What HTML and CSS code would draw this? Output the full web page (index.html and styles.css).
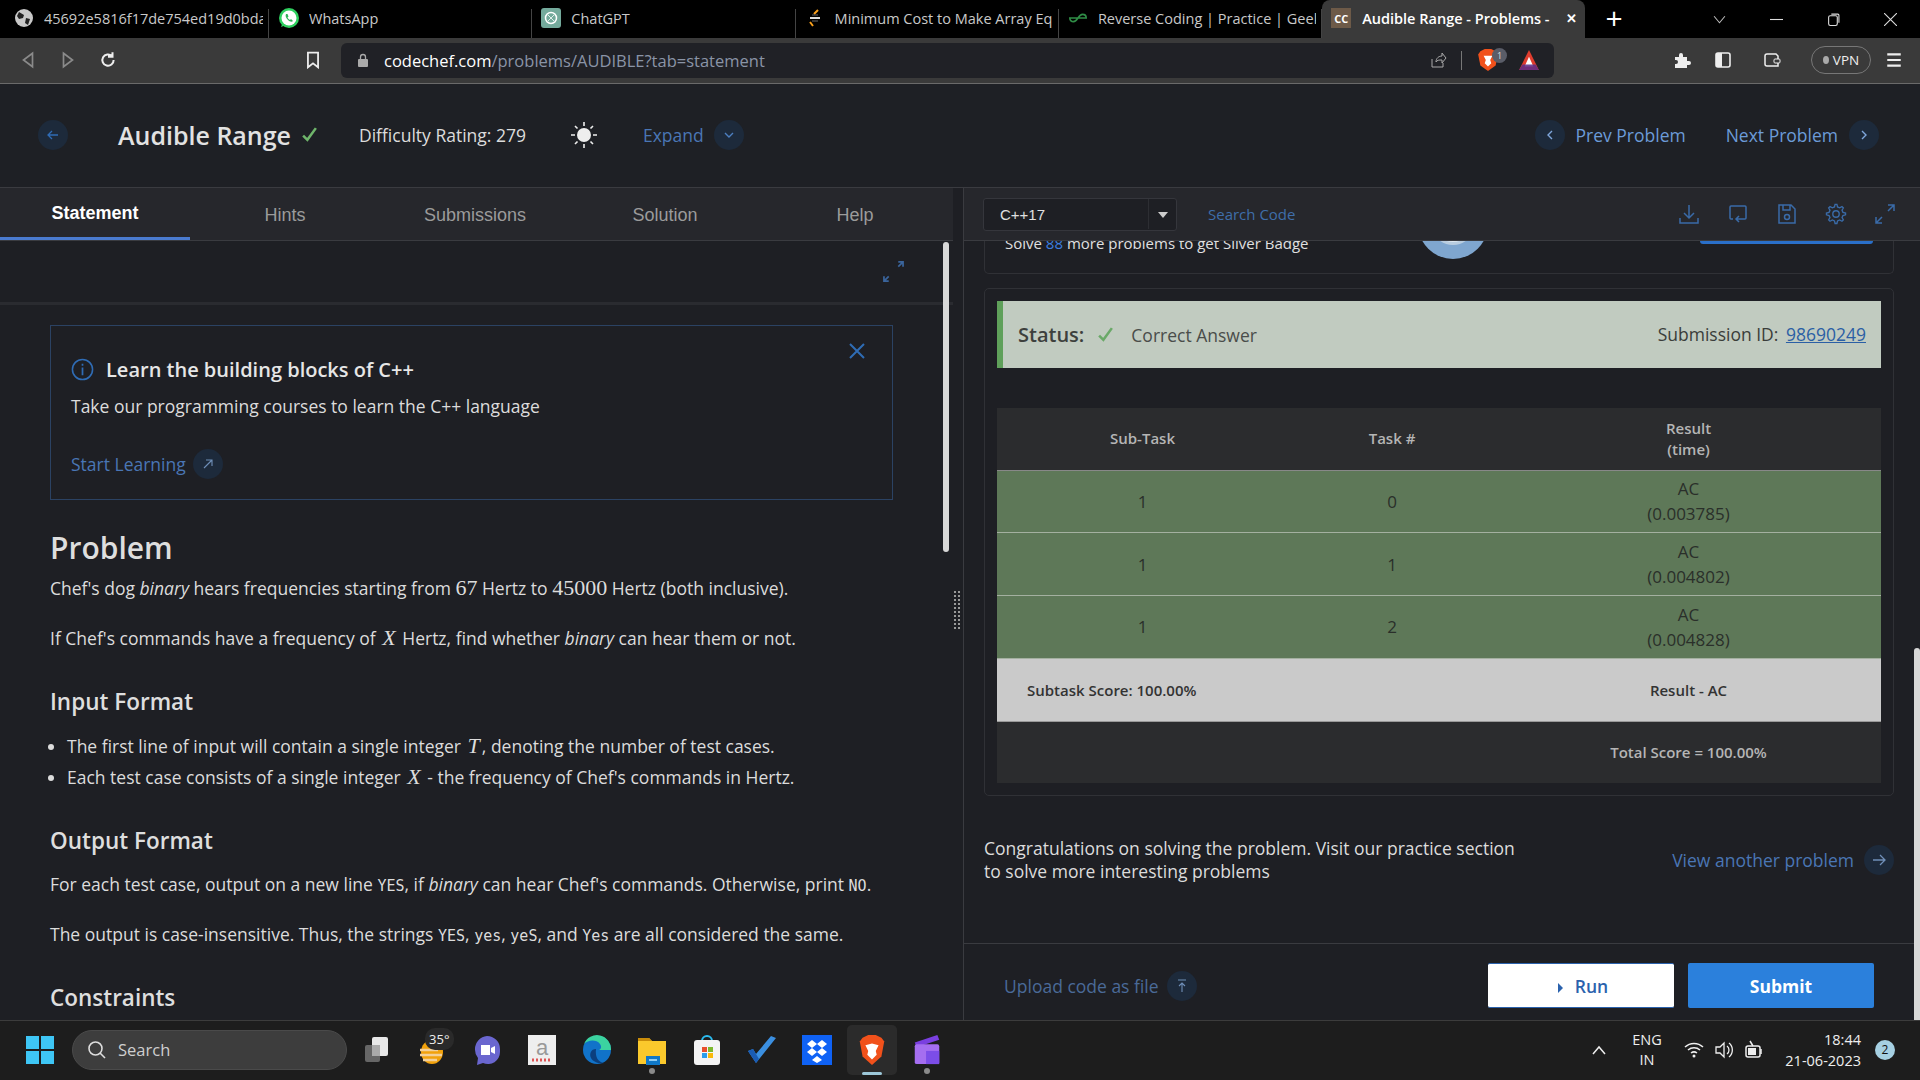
FILE: index.html
```html
<!DOCTYPE html>
<html lang="en">
<head>
<meta charset="UTF-8">
<title>Audible Range - Problems - CodeChef</title>
<link rel="stylesheet" href="styles.css">
</head>
<body>

<!-- Browser tabs -->
<div class="tabstrip">
    <div class="tab">
        <svg class="fav" viewBox="0 0 20 20"><circle cx="10" cy="10" r="9" fill="#c9c9c9"/><path d="M5 4l5 3-1 3-4 1-2-3zM12 10l4 1-2 6-3-2z" fill="#222"/></svg>
        <span class="tab-name">45692e5816f17de754ed19d0bda</span>
    </div>
    <div class="tab">
        <svg class="fav fav-big" viewBox="0 0 22 22"><circle cx="11" cy="11" r="10" fill="#2fd05f"/><path d="M3 20l2-5 3 3z" fill="#2fd05f"/><circle cx="11" cy="11" r="7.5" fill="#fff"/><path d="M8 7c-1 2 0 4 2 6s4 2 5 1l-2-2-1 1c-1-.5-2-1.500-2.500-2.500l1-1-1-2.500z" fill="#2fb257"/></svg>
        <span class="tab-name">WhatsApp</span>
    </div>
    <div class="tab">
        <svg class="fav" viewBox="0 0 20 20"><rect width="20" height="20" rx="3" fill="#74aa9c"/><circle cx="10" cy="10" r="5.500" fill="none" stroke="#fff" stroke-width="1.500"/><path d="M6 6l8 8M14 6l-8 8" stroke="#dfeeea"/></svg>
        <span class="tab-name">ChatGPT</span>
    </div>
    <div class="tab">
        <svg class="fav" viewBox="0 0 20 20"><path d="M13 2l-4 4M5 14l3 4" stroke="#f89f1b" stroke-width="2" fill="none"/><path d="M5 10h10" stroke="#ddd" stroke-width="2"/><path d="M7 7h6M7 13h6" stroke="#666"/></svg>
        <span class="tab-name">Minimum Cost to Make Array Eq</span>
    </div>
    <div class="tab">
        <svg class="fav" viewBox="0 0 22 20"><path d="M11 10H20c0-3-2-4-4-4s-3 1-5 4-3 4-5 4-4-1-4-4h9" fill="none" stroke="#2f8d46" stroke-width="1.800"/></svg>
        <span class="tab-name">Reverse Coding | Practice | Geeks</span>
    </div>
    <div class="tab tab-active">
        <span class="fav-cc">CC</span>
        <span class="tab-name">Audible Range - Problems -</span>
        <span class="tab-x">✕</span>
    </div>
    <span class="tab-plus">+</span>
    <div class="win-btns">
        <svg class="win-icon" viewBox="0 0 12 12"><path d="M1 3l5 6 5-6" fill="none" stroke="#bbb"/></svg>
        <svg class="win-icon" viewBox="0 0 12 12"><path d="M0 6h12" stroke="#ddd"/></svg>
        <svg class="win-icon" viewBox="0 0 12 12"><rect x="1.500" y="2.500" width="8" height="9" rx="1.500" fill="none" stroke="#ddd"/><path d="M4 1h6a1 1 0 0 1 1 1v7" fill="none" stroke="#ddd"/></svg>
        <svg class="win-icon" viewBox="0 0 12 12"><path d="M0 0l12 12M12 0L0 12" stroke="#ddd"/></svg>
    </div>
</div>

<!-- Browser toolbar -->
<div class="toolbar">
    <div class="nav-btns">
        <svg class="tool-icon" viewBox="0 0 16 16"><path d="M12 2L4 8l8 6z" fill="none" stroke="#8a8a8a" stroke-width="1.500"/></svg>
        <svg class="tool-icon" viewBox="0 0 16 16"><path d="M4 2l8 6-8 6z" fill="none" stroke="#8a8a8a" stroke-width="1.500"/></svg>
        <svg class="tool-icon" viewBox="0 0 16 16"><path d="M13 8a5 5 0 1 1-1.500-3.500M12 1v4H8" fill="none" stroke="#eee" stroke-width="1.800"/></svg>
    </div>
    <svg class="tool-icon bookmark" viewBox="0 0 16 16"><path d="M3.500 1.500h9v13L8 11l-4.500 3.500z" fill="none" stroke="#eee" stroke-width="1.600"/></svg>
    <div class="urlbar">
        <svg class="lock" viewBox="0 0 12 14"><rect x="1" y="6" width="10" height="8" rx="1" fill="#aaa"/><path d="M3.500 6V4a2.500 2.500 0 0 1 5 0v2" fill="none" stroke="#aaa" stroke-width="1.300"/></svg>
        <span class="url"><span class="url-host">codechef.com</span>/problems/AUDIBLE?tab=statement</span>
        <div class="url-right">
            <svg class="tool-icon" viewBox="0 0 18 18"><path d="M3 8v8h11v-4M7 11c0-4 3-6 6-6V2l4 5-4 5V9c-3 0-5 0-6 2z" fill="none" stroke="#aaa"/></svg>
            <span class="url-sep"></span>
            <div class="brave-wrap">
                <svg class="brave-small" viewBox="0 0 18 22"><path d="M2 3l4-2h6l4 2 2 3-2 10-7 5-7-5L0 6z" fill="#f1511b"/><path d="M5 7h8l-2 4 1 3-3 3-3-3 1-3z" fill="#fff"/></svg>
                <span class="brave-count">1</span>
            </div>
            <svg class="tool-icon tri" viewBox="0 0 20 20"><path d="M10 1l9 18H1z" fill="#e03d2e"/><path d="M10 7l4 9H6z" fill="#fff"/><path d="M1 19l3-5h12l3 5z" fill="#5b2c8a" opacity=".85"/></svg>
        </div>
    </div>
    <div class="toolbar-right">
        <svg class="tool-icon" viewBox="0 0 18 18"><path d="M2 6h4V4a2 2 0 0 1 4 0v2h4v4h2a2 2 0 0 1 0 4h-2v3H2v-4h1a2 2 0 0 0 0-4H2z" fill="#eee"/></svg>
        <svg class="tool-icon" viewBox="0 0 18 18"><rect x="2" y="2" width="14" height="14" rx="2" fill="none" stroke="#eee" stroke-width="1.600"/><rect x="2" y="2" width="6" height="14" fill="#eee"/></svg>
        <svg class="tool-icon wallet" viewBox="0 0 18 18"><path d="M2 5a2 2 0 0 1 2-2h9l2 2v10H4a2 2 0 0 1-2-2z" fill="none" stroke="#eee" stroke-width="1.500"/><rect x="11" y="8" width="6" height="4" rx="1" fill="#3a3a3a" stroke="#eee"/></svg>
        <span class="vpn"><i class="vpn-dot"></i>VPN</span>
        <svg class="tool-icon" viewBox="0 0 16 16"><path d="M2 3h12M2 8h12M2 13h12" stroke="#eee" stroke-width="1.800"/></svg>
    </div>
</div>

<!-- Problem header -->
<div class="head">
    <span class="round"><svg viewBox="0 0 14 14"><path d="M12 7H2M6 3L2 7l4 4" fill="none" stroke="#2f6cb5" stroke-width="1.300"/></svg></span>
    <h1 class="title">Audible Range</h1>
    <svg class="title-check" viewBox="0 0 16 14"><path d="M2 8l4 4 8-11" fill="none" stroke="#6fb56b" stroke-width="2.400"/></svg>
    <span class="rating">Difficulty Rating: 279</span>
    <svg class="sun" viewBox="0 0 28 28"><circle cx="14" cy="14" r="7" fill="#eee"/><path d="M14 1v4M14 23v4M1 14h4M23 14h4M5 5l2.500 2.500M20.500 20.500L23 23M23 5l-2.500 2.500M7.500 20.500L5 23" stroke="#eee" stroke-width="1.600"/></svg>
    <span class="link expand">Expand</span>
    <span class="round"><svg viewBox="0 0 14 14"><path d="M3 5l4 4 4-4" fill="none" stroke="#4d7fc0" stroke-width="1.400"/></svg></span>
    <div class="head-right">
        <span class="round"><svg viewBox="0 0 14 14"><path d="M9 3L5 7l4 4" fill="none" stroke="#7fa7dc" stroke-width="1.400"/></svg></span>
        <span class="link link-light">Prev Problem</span>
        <span class="link link-light next">Next Problem</span>
        <span class="round"><svg viewBox="0 0 14 14"><path d="M5 3l4 4-4 4" fill="none" stroke="#7fa7dc" stroke-width="1.400"/></svg></span>
    </div>
</div>

<div class="workspace">

    <!-- Left side: statement -->
    <div class="left">
        <div class="tabs">
            <span class="tabs-item tabs-on">Statement</span>
            <span class="tabs-item">Hints</span>
            <span class="tabs-item">Submissions</span>
            <span class="tabs-item">Solution</span>
            <span class="tabs-item">Help</span>
        </div>
        <div class="subbar">
            <svg class="mini-expand" viewBox="0 0 22 22"><path d="M16 1h5v5M21 1l-5 5M6 21H1v-5M1 21l5-5" fill="none" stroke="#3a649c" stroke-width="1.800"/></svg>
        </div>
        <div class="statement">
            <div class="alert">
                <svg class="alert-x" viewBox="0 0 18 18"><path d="M2 2l14 14M16 2L2 16" stroke="#2f6cb5" stroke-width="2"/></svg>
                <div class="alert-title">
                    <svg class="info" viewBox="0 0 24 24"><circle cx="12" cy="12" r="10.500" fill="none" stroke="#2f6cb5" stroke-width="1.600"/><path d="M12 10v8M12 6v2" stroke="#2f6cb5" stroke-width="1.800"/></svg>
                    Learn the building blocks of C++
                </div>
                <p class="alert-text">Take our programming courses to learn the C++ language</p>
                <div class="alert-link">
                    <span class="link">Start Learning</span>
                    <span class="round"><svg viewBox="0 0 14 14"><path d="M3 11l8-8M5 3h6v6" fill="none" stroke="#6f8fb8" stroke-width="1.100"/></svg></span>
                </div>
            </div>

            <h2 class="h-problem">Problem</h2>
            <p class="para">Chef's dog <i>binary</i> hears frequencies starting from <span class="math">67</span> Hertz to <span class="math">45000</span> Hertz (both inclusive).</p>
            <p class="para">If Chef's commands have a frequency of <i class="math math-var">X</i> Hertz, find whether <i>binary</i> can hear them or not.</p>

            <h3 class="h-sec">Input Format</h3>
            <ul class="list">
                <li>The first line of input will contain a single integer <i class="math math-var">T</i>, denoting the number of test cases.</li>
                <li>Each test case consists of a single integer <i class="math math-var">X</i> - the frequency of Chef's commands in Hertz.</li>
            </ul>

            <h3 class="h-sec">Output Format</h3>
            <p class="para">For each test case, output on a new line <span class="code">YES</span>, if <i>binary</i> can hear Chef's commands. Otherwise, print <span class="code">NO</span>.</p>
            <p class="para">The output is case-insensitive. Thus, the strings <span class="code">YES</span>, <span class="code">yes</span>, <span class="code">yeS</span>, and <span class="code">Yes</span> are all considered the same.</p>

            <h3 class="h-sec">Constraints</h3>
        </div>
        <div class="scroll-thumb"></div>
    </div>

    <div class="divider"><span class="grip"></span></div>

    <!-- Right side: editor and result -->
    <div class="right">
        <div class="editor-bar">
            <div class="lang">
                <span class="lang-name">C++17</span>
                <span class="lang-arrow"></span>
            </div>
            <span class="search-code">Search Code</span>
            <div class="editor-icons">
                <svg viewBox="0 0 22 22"><path d="M11 2v13M6 10l5 5 5-5M2 15v5h18v-5" fill="none" stroke="#3a6ba8" stroke-width="1.500"/></svg>
                <svg viewBox="0 0 22 22"><path d="M6 16H4a1 1 0 0 1-1-1V4a1 1 0 0 1 1-1h14a1 1 0 0 1 1 1v11a1 1 0 0 1-1 1H9M12 13l-3 3 3 3" fill="none" stroke="#3a6ba8" stroke-width="1.500"/></svg>
                <svg viewBox="0 0 22 22"><path d="M3 2h12l4 4v14H3zM7 2v5h7V2" fill="none" stroke="#3a6ba8" stroke-width="1.500"/><circle cx="11" cy="14" r="2.500" fill="none" stroke="#3a6ba8" stroke-width="1.500"/></svg>
                <svg viewBox="0 0 24 24"><circle cx="12" cy="12" r="3.500" fill="none" stroke="#3a6ba8" stroke-width="1.500"/><path d="M11 1.500h2l.7 2.800 2.300 1 2.500-1.400 1.500 1.500-1.400 2.500 1 2.300 2.800.7v2l-2.800.7-1 2.300 1.400 2.500-1.500 1.500-2.500-1.400-2.300 1-.7 2.800h-2l-.7-2.800-2.300-1-2.500 1.400-1.500-1.500 1.400-2.500-1-2.300-2.800-.7v-2l2.800-.7 1-2.300-1.400-2.500 1.500-1.500 2.500 1.400 2.300-1z" fill="none" stroke="#3a6ba8" stroke-width="1.500"/></svg>
                <svg viewBox="0 0 22 22"><path d="M14 2h6v6M20 2l-6 6M8 20H2v-6M2 20l6-6" fill="none" stroke="#3a6ba8" stroke-width="1.500"/></svg>
            </div>
        </div>
        <div class="result-scroll">
            <div class="badge-card">
                <span class="badge-text">Solve <span class="badge-num">88</span> more problems to get Silver Badge</span>
                <span class="badge-pic"><i></i></span>
                <span class="badge-btn"></span>
            </div>
            <div class="result-card">
                <div class="status">
                    <span class="status-label">Status:</span>
                    <svg class="status-check" viewBox="0 0 16 14"><path d="M2 8l4 4 8-11" fill="none" stroke="#6aa968" stroke-width="2.400"/></svg>
                    <span class="status-text">Correct Answer</span>
                    <span class="sub-id">Submission ID: <a class="sub-link">98690249</a></span>
                </div>
                <table class="result-table">
                    <thead>
                        <tr><th>Sub-Task</th><th>Task #</th><th>Result<br>(time)</th></tr>
                    </thead>
                    <tbody>
                        <tr class="ok"><td>1</td><td>0</td><td>AC<br>(0.003785)</td></tr>
                        <tr class="ok"><td>1</td><td>1</td><td>AC<br>(0.004802)</td></tr>
                        <tr class="ok"><td>1</td><td>2</td><td>AC<br>(0.004828)</td></tr>
                        <tr class="subtotal"><td colspan="2">Subtask Score: 100.00%</td><td>Result - AC</td></tr>
                        <tr class="total"><td colspan="2"></td><td>Total Score = 100.00%</td></tr>
                    </tbody>
                </table>
            </div>
            <div class="congrats">
                <p class="congrats-text">Congratulations on solving the problem. Visit our practice section to solve more interesting problems</p>
                <div class="view-next">
                    <span class="link">View another problem</span>
                    <span class="round"><svg viewBox="0 0 14 14"><path d="M1 7h12M8 2l5 5-5 5" fill="none" stroke="#6f8fb8" stroke-width="1.300"/></svg></span>
                </div>
            </div>
        </div>
        <div class="actions">
            <span class="link upload">Upload code as file</span>
            <span class="round"><svg viewBox="0 0 14 14"><path d="M3 1h8M7 13V4M4 7l3-3 3 3" fill="none" stroke="#6f8fb8" stroke-width="1.100"/></svg></span>
            <div class="action-btns">
                <button class="btn-run"><i class="run-arrow"></i>Run</button>
                <button class="btn-submit">Submit</button>
            </div>
        </div>
        <div class="scroll-thumb-right"></div>
    </div>
</div>

<!-- Windows taskbar -->
<div class="taskbar">
    <svg class="win-logo" viewBox="0 0 30 30"><path d="M1 1h13v13H1zM16 1h13v13H16zM1 16h13v13H1zM16 16h13v13H16z" fill="#3ec6f5"/></svg>
    <div class="task-search">
        <svg viewBox="0 0 20 20"><circle cx="8.500" cy="8.500" r="6.500" fill="none" stroke="#ddd" stroke-width="1.600"/><path d="M13 13l5 5" stroke="#ddd" stroke-width="1.600"/></svg>
        <span>Search</span>
    </div>
    <div class="task-apps">
        <span class="app"><svg viewBox="0 0 30 30"><rect x="3" y="10" width="15" height="17" rx="2" fill="#666"/><rect x="10" y="2" width="16" height="19" rx="2" fill="#e8e8e8"/><rect x="10" y="10" width="8" height="11" fill="#aaa"/></svg></span>
        <span class="app app-weather"><svg viewBox="0 0 30 30"><ellipse cx="15" cy="17" rx="11" ry="12" fill="#f2a20c"/><path d="M3 15h18M3 20h22M6 25h14" stroke="#f3d09a" stroke-width="2.500"/></svg><b class="temp">35°</b></span>
        <span class="app"><svg viewBox="0 0 30 30"><path d="M15 1a13 13 0 0 1 13 13v3a12 12 0 0 1-17 11l-6 2 1-7a13 13 0 0 1-3-9A13 13 0 0 1 15 1z" fill="#6a66cf"/><path d="M9 10h9v10H9zM19 13l4-2v8l-4-2z" fill="#fff"/></svg></span>
        <span class="app"><svg viewBox="0 0 30 30"><rect x="1" y="0" width="28" height="30" fill="#eee"/><text x="15" y="20" text-anchor="middle" class="amazon-a">a</text><path d="M5 25h20" stroke="#d55" stroke-width="3" stroke-dasharray="2 2"/></svg></span>
        <span class="app"><svg viewBox="0 0 30 30"><circle cx="15" cy="15" r="14" fill="#1173c9"/><path d="M29 15a14 14 0 0 0-27-6c4-4 12-5 16 0 2 3 1 5-1 6z" fill="#3bd3a0"/><path d="M14 14c-5 0-7 5-5 9s8 6 13 5c-6-1-9-6-8-14z" fill="#0b3f7e"/></svg></span>
        <span class="app app-open"><svg viewBox="0 0 30 30"><path d="M1 3h11l3 3h14v23H1z" fill="#fbc92c"/><path d="M1 3h11l3 3H1z" fill="#c98c0a"/><rect x="9" y="21" width="14" height="9" fill="#0f78c9"/><path d="M12 25h8" stroke="#8ecdf5" stroke-width="2"/></svg></span>
        <span class="app"><svg viewBox="0 0 30 30"><path d="M10 6a5 5 0 0 1 10 0" fill="none" stroke="#2bbcf0" stroke-width="2"/><rect x="2" y="5" width="26" height="25" rx="3" fill="#f4f4f4"/><path d="M10 12h5v5h-5z" fill="#e8502e"/><path d="M16 12h5v5h-5z" fill="#7db92f"/><path d="M10 18h5v5h-5z" fill="#2a9ded"/><path d="M16 18h5v5h-5z" fill="#f9b90a"/></svg></span>
        <span class="app"><svg viewBox="0 0 30 30"><path d="M1 16l8 12L29 3l-5-2L9 19l-3-5z" fill="#3b8fe0"/><path d="M1 16l8 12 3-4-6-10z" fill="#1a5cb4"/></svg></span>
        <span class="app"><svg viewBox="0 0 30 30"><rect width="30" height="30" fill="#0f62f5"/><path d="M10 5l5 4-5 4-5-4zM20 5l5 4-5 4-5-4zM10 13l5 4-5 4-5-4zM20 13l5 4-5 4-5-4zM15 21l5 4-5 3-5-3z" fill="#fff"/></svg></span>
        <span class="app app-active"><svg viewBox="0 0 30 34"><path d="M5 4l6-3h8l6 3 3 4-3 16-10 9-10-9L2 8z" fill="#f1511b"/><path d="M8 12l7-2 7 2-3 6 1 4-5 5-5-5 1-4z" fill="#fff"/></svg></span>
        <span class="app app-open"><svg viewBox="0 0 30 34"><path d="M2 9L26 1l2 5L4 14z" fill="#7a3fe0"/><rect x="2" y="11" width="26" height="21" rx="2" fill="#a56ef0"/><rect x="14" y="18" width="14" height="14" fill="#7c4de8"/></svg></span>
    </div>
    <div class="tray">
        <svg class="tray-up" viewBox="0 0 14 10"><path d="M1 9l6-7 6 7" fill="none" stroke="#eee" stroke-width="1.500"/></svg>
        <span class="tray-lang">ENG<br>IN</span>
        <svg class="tray-icon" viewBox="0 0 20 20"><path d="M1 7a13 13 0 0 1 18 0M4 10a9 9 0 0 1 12 0M7 13a5 5 0 0 1 6 0" fill="none" stroke="#eee" stroke-width="1.500"/><circle cx="10" cy="16" r="1.500" fill="#eee"/></svg>
        <svg class="tray-icon" viewBox="0 0 20 20"><path d="M2 7h4l4-4v14l-4-4H2z" fill="none" stroke="#eee" stroke-width="1.300"/><path d="M13 6a5 5 0 0 1 0 8M15 3a9 9 0 0 1 0 14" fill="none" stroke="#eee" stroke-width="1.300"/></svg>
        <svg class="tray-icon" viewBox="0 0 20 20"><rect x="2" y="6" width="14" height="11" rx="2" fill="none" stroke="#eee" stroke-width="1.500"/><rect x="4" y="8" width="8" height="7" fill="#eee"/><path d="M17 9v5M6 1l3 5" stroke="#eee" stroke-width="1.500"/></svg>
        <span class="clock">18:44<br>21-06-2023</span>
        <span class="notif">2</span>
    </div>
</div>

</body>
</html>
```

FILE: styles.css
```css
* {
    box-sizing: border-box;
}
body {
    margin: 0;
    width: 1920px;
    height: 1080px;
    overflow: hidden;
    display: flex;
    flex-direction: column;
    background: #1e1f24;
    color: #e4e4e4;
    font-family: 'Open Sans', sans-serif;
}
p, h1, h2, h3, ul {
    margin: 0;
}

/* Browser tabs */
.tabstrip {
    height: 38px;
    flex: none;
    display: flex;
    align-items: stretch;
    background: #000;
    font-family: 'Open Sans', sans-serif;
    font-size: 14.500px;
    color: #c9c9c9;
}
.tab {
    width: 263.3px;
    display: flex;
    align-items: center;
    gap: 10px;
    padding: 0 6px 2px 9px;
    position: relative;
    white-space: nowrap;
    overflow: hidden;
}
.tab::after {
    content: '';
    position: absolute;
    right: 0;
    top: 9px;
    bottom: 0;
    width: 1px;
    background: #444;
}
.tab:first-child {
    width: 269px;
    padding-left: 14px;
}
.tab-name {
    overflow: hidden;
    flex: 1;
}
.fav {
    width: 20px;
    height: 20px;
    flex: none;
}
.fav-big {
    width: 22px;
    height: 22px;
    margin-right: -1px;
}
.tab-active {
    background: #3a3a3a;
    color: #fff;
    font-weight: 600;
    border-radius: 8px 8px 0 0;
    gap: 11px;
}
.tab-active::after {
    display: none;
}
.fav-cc {
    width: 20px;
    height: 20px;
    background: #6d5a48;
    color: #fff;
    font-size: 11px;
    font-weight: 700;
    display: flex;
    align-items: center;
    justify-content: center;
    flex: none;
}
.tab-x {
    font-size: 13px;
    margin-right: 2px;
}
.tab-plus {
    color: #fff;
    font-size: 30px;
    font-weight: 400;
    line-height: 36px;
    margin-left: 20px;
}
.win-btns {
    margin-left: auto;
    display: flex;
    align-items: center;
    gap: 44px;
    padding-right: 23px;
}
.win-icon {
    width: 13px;
    height: 13px;
}

/* Browser toolbar */
.toolbar {
    height: 46px;
    flex: none;
    display: flex;
    align-items: center;
    background: #3a3a3a;
    border-bottom: 1px solid #6a6a6a;
    padding-bottom: 1px;
}
.nav-btns {
    display: flex;
    gap: 22px;
    padding-left: 19px;
    width: 304px;
}
.tool-icon {
    width: 18px;
    height: 18px;
    flex: none;
}
.bookmark {
    margin-right: 19px;
}
.urlbar {
    width: 1213px;
    height: 35px;
    background: #202126;
    border-radius: 6px;
    display: flex;
    align-items: center;
    padding: 0 14px 0 16px;
    font-size: 16.500px;
    color: #8a94a6;
}
.lock {
    width: 12px;
    height: 14px;
    margin-right: 15px;
}
.url-host {
    color: #fff;
}
.url-right {
    margin-left: auto;
    display: flex;
    align-items: center;
    gap: 14px;
}
.url-sep {
    width: 1px;
    height: 19px;
    background: #777;
}
.tri {
    width: 22px;
    height: 22px;
}
.brave-wrap {
    position: relative;
    width: 24px;
    height: 24px;
    margin: 0 2px 0 2px;
}
.brave-small {
    width: 20px;
    height: 24px;
}
.brave-count {
    position: absolute;
    top: 0;
    right: -5px;
    width: 15px;
    height: 15px;
    border-radius: 50%;
    background: #5a5d68;
    color: #ddd;
    font-size: 9px;
    text-align: center;
    line-height: 15px;
}
.toolbar-right {
    display: flex;
    align-items: center;
    gap: 23px;
    margin-left: 119px;
}
.wallet {
    margin-left: 8px;
}
.vpn {
    width: 60px;
    height: 28px;
    border: 1px solid #777;
    border-radius: 14px;
    display: flex;
    align-items: center;
    justify-content: center;
    gap: 4px;
    font-size: 13.500px;
    color: #eee;
    margin: 0 -9px 0 7px;
}
.vpn-dot {
    width: 6px;
    height: 8px;
    border-radius: 50%;
    background: #aaa;
}

/* Problem header */
.head {
    height: 104px;
    flex: none;
    display: flex;
    align-items: center;
    padding: 0 41px 2px 38px;
    background: #1e2025;
    border-bottom: 1px solid #3a3b40;
}
.round {
    width: 30px;
    height: 30px;
    flex: none;
    border-radius: 50%;
    background: #1d2a3b;
    display: flex;
    align-items: center;
    justify-content: center;
}
.round svg {
    width: 14px;
    height: 14px;
}
.title {
    font-size: 25px;
    font-weight: 600;
    color: #e2e2e2;
    margin-left: 50px;
}
.title-check {
    width: 17px;
    height: 15px;
    margin-left: 10px;
}
.rating {
    font-size: 17.500px;
    color: #dcdcdc;
    margin-left: 41px;
}
.sun {
    width: 28px;
    height: 28px;
    margin-left: 44px;
}
.link {
    color: #4a76b5;
    font-size: 17.500px;
    white-space: nowrap;
}
.link-light {
    color: #6c9bd8;
}
.expand {
    margin-left: 45px;
    margin-right: 10px;
}
.head-right {
    margin-left: auto;
    display: flex;
    align-items: center;
    gap: 11px;
}
.next {
    margin-left: 29px;
}

/* Main split */
.workspace {
    flex: 1;
    display: flex;
    min-height: 0;
}
.left {
    width: 953px;
    flex: none;
    position: relative;
    overflow: hidden;
}
.divider {
    width: 11px;
    flex: none;
    border-right: 1px solid #3a3b40;
    display: flex;
    align-items: center;
    padding: 12px 0 0 1px;
}
.grip {
    width: 6px;
    height: 38px;
    border-left: 2px dotted #999;
    border-right: 2px dotted #999;
}
.right {
    flex: 1;
    min-width: 0;
    display: flex;
    flex-direction: column;
    position: relative;
}

/* Statement tabs */
.tabs {
    height: 53px;
    display: flex;
    background: #26272c;
    border-bottom: 1px solid #3a3b40;
}
.tabs-item {
    width: 190px;
    display: flex;
    align-items: center;
    justify-content: center;
    padding-top: 2px;
    font-family: 'Liberation Sans', Arial, sans-serif;
    font-size: 18px;
    color: #9b9b9b;
}
.tabs-on {
    color: #fff;
    font-weight: 700;
    border-bottom: 3px solid #4a7bd0;
}
.subbar {
    height: 64px;
    border-bottom: 3px solid #2a2b30;
    display: flex;
    justify-content: flex-end;
    align-items: center;
    padding: 0 49px 0 0;
}
.mini-expand {
    width: 21px;
    height: 21px;
}
.statement {
    padding: 20px 57px 0 50px;
    font-size: 17.500px;
    color: #dcdcdc;
}
.alert {
    width: 843px;
    height: 175px;
    border: 1px solid #2b4263;
    padding: 29px 20px 0;
    position: relative;
    margin-bottom: 27px;
}
.alert-x {
    position: absolute;
    top: 16px;
    right: 26px;
    width: 18px;
    height: 18px;
}
.alert-title {
    display: flex;
    align-items: center;
    gap: 12px;
    font-size: 20px;
    font-weight: 600;
    color: #e6e6e6;
    height: 28px;
}
.info {
    width: 23px;
    height: 23px;
}
.alert-text {
    margin-top: 9px;
    line-height: 28px;
}
.alert-link {
    display: flex;
    align-items: center;
    gap: 7px;
    margin-top: 29px;
}
.h-problem {
    font-size: 30px;
    font-weight: 600;
    line-height: 42px;
    margin-bottom: 5px;
    color: #dedede;
}
.para {
    line-height: 28px;
    margin-bottom: 22px;
}
.para i {
    font-style: italic;
}
.math {
    font-family: 'Liberation Serif', serif;
    font-size: 22px;
    line-height: 0;
}
.math-var {
    margin: 0 2px;
}
.code {
    font-family: 'DejaVu Sans Mono', monospace;
    font-size: 15px;
    line-height: 0;
}
.h-sec {
    font-size: 22.500px;
    font-weight: 600;
    line-height: 34px;
    margin-top: 33px;
    margin-bottom: 12px;
    color: #dedede;
}
.list {
    padding-left: 17px;
    line-height: 31px;
    margin-bottom: -2px;
}
.scroll-thumb {
    position: absolute;
    top: 54px;
    left: 943px;
    width: 6px;
    height: 310px;
    border-radius: 3px;
    background: #d8d8d8;
}

/* Editor bar */
.editor-bar {
    height: 53px;
    flex: none;
    display: flex;
    align-items: center;
    background: #26272c;
    border-bottom: 1px solid #3a3b40;
    padding: 0 24px 0 19px;
}
.lang {
    width: 194px;
    height: 33px;
    display: flex;
    align-items: center;
    border: 1px solid #35363c;
    border-radius: 3px;
    background: #1e1f24;
    font-family: 'Liberation Sans', Arial, sans-serif;
    font-size: 15px;
    padding-left: 16px;
    color: #e0e0e0;
}
.lang-arrow {
    margin-left: auto;
    width: 28px;
    height: 30px;
    border-left: 1px solid #2d2e33;
    position: relative;
}
.lang-arrow::after {
    content: '';
    position: absolute;
    left: 9px;
    top: 13px;
    border-left: 5px solid transparent;
    border-right: 5px solid transparent;
    border-top: 6px solid #ccc;
}
.search-code {
    margin-left: 31px;
    color: #3f6ea9;
    font-family: 'Open Sans', sans-serif;
    font-size: 15px;
}
.editor-icons {
    margin-left: auto;
    display: flex;
    align-items: center;
    gap: 27px;
}
.editor-icons svg {
    width: 22px;
    height: 24px;
}

/* Result area */
.result-scroll {
    flex: 1;
    min-height: 0;
    padding: 0 26px 0 20px;
    overflow: hidden;
}
.badge-card {
    height: 33px;
    border: 1px solid #303136;
    border-top: 0;
    border-radius: 0 0 5px 5px;
    display: flex;
    padding-left: 20px;
    position: relative;
    overflow: hidden;
    font-size: 15px;
    color: #e0e0e0;
}
.badge-text {
    line-height: 4px;
}
.badge-num {
    color: #3d7fe0;
}
.badge-pic {
    position: absolute;
    left: 433px;
    top: -52px;
    width: 70px;
    height: 70px;
    border-radius: 50%;
    background: #7fa6cf;
    display: flex;
    align-items: center;
    justify-content: center;
}
.badge-pic i {
    width: 44px;
    height: 44px;
    margin-top: -2px;
    border-radius: 50%;
    background: #dfe8f0;
    border: 3px solid #b9cde0;
}
.badge-btn {
    position: absolute;
    left: 715px;
    top: 0;
    width: 173px;
    height: 3px;
    background: #2a6fc9;
    border-radius: 0 0 3px 3px;
}
.result-card {
    margin-top: 14px;
    height: 508px;
    border: 1px solid #303136;
    border-radius: 5px;
    padding: 12px 12px 0;
}
.status {
    height: 67px;
    display: flex;
    align-items: center;
    background: #c1cbc0;
    border-left: 6px solid #5fa05a;
    padding: 0 15px 0 15px;
    color: #3a3d3a;
    font-size: 17.500px;
}
.status-label {
    font-size: 20px;
    font-weight: 600;
    color: #3d403d;
}
.status-check {
    width: 17px;
    height: 15px;
    margin: 0 17px 0 13px;
}
.status-text {
    font-size: 17.500px;
    color: #4a4d4a;
}
.sub-id {
    margin-left: auto;
    padding-bottom: 2px;
}
.sub-link {
    color: #2b5fa5;
    text-decoration: underline;
    margin-left: 3px;
}
.result-table {
    width: 884px;
    margin-top: 40px;
    border-collapse: collapse;
    table-layout: fixed;
    text-align: center;
    font-size: 16px;
    line-height: 24px;
}
.result-table th:nth-child(1) {
    width: 291px;
}
.result-table th:nth-child(2) {
    width: 208px;
}
.result-table th {
    height: 62px;
    background: #2b2c2e;
    color: #b5b5b5;
    font-size: 15px;
    font-weight: 600;
    line-height: 21px;
    border-bottom: 1px solid #888;
}
.result-table td {
    padding: 0;
}
.ok td {
    height: 62.700px;
    background: #5e7858;
    color: #2a2f2a;
    font-size: 17px;
    line-height: 25px;
    border-bottom: 1px solid #a4b0a0;
}
.subtotal td {
    height: 63px;
    background: #cacaca;
    color: #333;
    font-size: 15px;
    font-weight: 600;
    border-bottom: 1px solid #999;
}
.subtotal td:first-child {
    text-align: left;
    padding-left: 30px;
}
.total td {
    height: 62px;
    background: #2b2c2e;
    color: #b5b5b5;
    font-size: 15px;
    font-weight: 600;
}
.congrats {
    margin-top: 41px;
    display: flex;
    justify-content: space-between;
    align-items: center;
}
.congrats-text {
    width: 540px;
    font-size: 17.500px;
    line-height: 23px;
    color: #dcdcdc;
}
.view-next {
    display: flex;
    align-items: center;
    gap: 10px;
}
.actions {
    height: 77px;
    flex: none;
    border-top: 1px solid #3a3b40;
    display: flex;
    align-items: center;
    padding: 7px 46px 0 40px;
    gap: 8px;
}
.upload {
    font-size: 17.500px;
    color: #4a6a98;
}
.action-btns {
    margin-left: auto;
    display: flex;
    gap: 14px;
}
.btn-run, .btn-submit {
    width: 186px;
    height: 45px;
    border: 0;
    border-radius: 2px;
    font-family: 'Open Sans', sans-serif;
    font-size: 17.500px;
    font-weight: 600;
}
.btn-run {
    background: #fff;
    color: #2b62ad;
    border-top: 1px solid #2b62ad;
    border-bottom: 1px solid #2b62ad;
    padding-left: 10px;
}
.run-arrow {
    display: inline-block;
    border-left: 5px solid #2b62ad;
    border-top: 5px solid transparent;
    border-bottom: 5px solid transparent;
    margin-right: 12px;
}
.btn-submit {
    background: #2b80dc;
    color: #fff;
    font-weight: 700;
}
.scroll-thumb-right {
    position: absolute;
    top: 460px;
    right: 0;
    width: 6px;
    height: 372px;
    border-radius: 3px 3px 0 0;
    background: #d8d8d8;
}

/* Windows taskbar */
.taskbar {
    height: 60px;
    flex: none;
    display: flex;
    align-items: center;
    background: #1d1d1d;
    border-top: 1px solid #3c3c3c;
    padding: 0 0 2px 25px;
    position: relative;
}
.win-logo {
    width: 30px;
    height: 30px;
    flex: none;
}
.task-search {
    width: 275px;
    height: 40px;
    margin-left: 17px;
    display: flex;
    align-items: center;
    gap: 11px;
    padding-left: 14px;
    border-radius: 20px;
    background: #3d3d3d;
    border: 1px solid #4a4a4a;
    font-size: 16.500px;
    color: #cfcfcf;
}
.task-search svg {
    width: 20px;
    height: 22px;
}
.task-apps {
    display: flex;
    margin-left: 4.500px;
    gap: 5px;
}
.app {
    width: 50px;
    height: 50px;
    display: flex;
    align-items: center;
    justify-content: center;
    position: relative;
    border-radius: 5px;
}
.app svg {
    width: 30px;
    height: 32px;
}
.app-active {
    background: #2b2b2b;
}
.app-active::after {
    content: '';
    position: absolute;
    bottom: 0;
    left: 15px;
    width: 20px;
    height: 3px;
    border-radius: 2px;
    background: #9cc7d8;
}
.app-open::after {
    content: '';
    position: absolute;
    bottom: 1px;
    left: 22px;
    width: 6px;
    height: 6px;
    border-radius: 50%;
    background: #8a8a8a;
}
.temp {
    position: absolute;
    top: 3px;
    right: 3px;
    padding: 2px 4px;
    border-radius: 10px;
    background: #2a2a2a;
    font-size: 13px;
    font-weight: 400;
    color: #eee;
}
.amazon-a {
    font-family: 'Liberation Sans', Arial, sans-serif;
    font-size: 22px;
    fill: #999;
}
.tray {
    margin-left: auto;
    display: flex;
    align-items: center;
    color: #eee;
    font-size: 14.500px;
    padding-right: 25px;
}
.tray-up {
    width: 14px;
    height: 10px;
    margin-right: 16px;
}
.tray-lang {
    width: 50px;
    text-align: center;
    line-height: 20px;
    margin-right: 12px;
}
.tray-icon {
    width: 20px;
    height: 20px;
    margin-right: 10px;
}
.clock {
    width: 79px;
    text-align: right;
    line-height: 21px;
    margin-left: 8px;
    margin-right: 14px;
}
.notif {
    width: 20px;
    height: 20px;
    border-radius: 50%;
    background: #a6d0e2;
    color: #111;
    font-size: 12px;
    text-align: center;
    line-height: 20px;
}
```
